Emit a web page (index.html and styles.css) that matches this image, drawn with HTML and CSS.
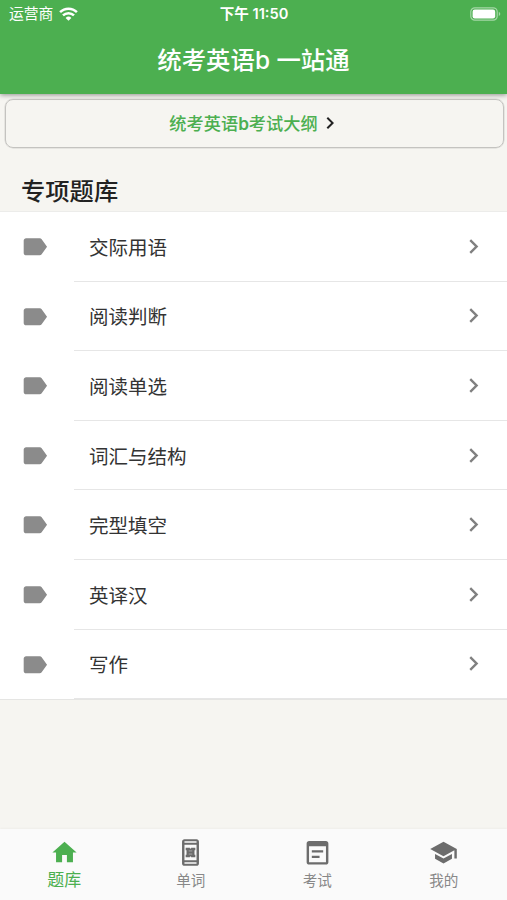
FILE: index.html
```html
<!DOCTYPE html>
<html lang="zh-CN">
<head>
<meta charset="utf-8">
<title>统考英语b 一站通</title>
<link rel="stylesheet" href="styles.css">
</head>
<body>
<svg width="0" height="0" class="defs">
  <symbol id="label" viewBox="0 0 24 24"><path d="M17.63 5.84C17.27 5.33 16.67 5 16 5L5 5.01C3.9 5.01 3 5.9 3 7v10c0 1.1.9 1.99 2 1.99L16 19c.67 0 1.27-.33 1.63-.84L22 12l-4.37-6.16z"/></symbol>
  <symbol id="chevron" viewBox="0 0 24 24"><path d="M10 6L8.59 7.41 13.17 12l-4.58 4.59L10 18l6-6z"/></symbol>
</svg>
<div class="app">
  <header class="header">
    <div class="status">
      <div class="carrier"><span>运营商</span>
        <svg class="wifi" viewBox="0 0 19 14" fill="none"><path d="M1.1 5.2a11.9 11.9 0 0 1 16.8 0M4 8.4a7.8 7.8 0 0 1 11 0"/><path d="M9.5 13.8L6.6 10.9a4.1 4.1 0 0 1 5.8 0z" fill="#fff" stroke="none"/></svg>
      </div>
      <div class="time">下午 11:50</div>
      <svg class="battery" viewBox="0 0 31 14"><rect x=".8" y=".8" width="26.4" height="12.4" rx="4" fill="none" stroke="#a5d7a7" stroke-width="1.2"/><rect x="2.6" y="2.6" width="22.6" height="8.8" rx="2.2" fill="#fff"/><path d="M28.8 4.8q3 2.2 0 4.4z" fill="#a5d7a7"/></svg>
    </div>
    <h1 class="title">统考英语b 一站通</h1>
  </header>
  <main class="main">
    <a class="outline"><span>统考英语<b>b</b>考试大纲</span><svg viewBox="0 0 24 24"><use href="#chevron"/></svg></a>
    <h2 class="section">专项题库</h2>
    <ul class="list">
      <li class="row"><svg class="tag"><use href="#label"/></svg><div class="cell"><span>交际用语</span><svg class="go"><use href="#chevron"/></svg></div></li>
      <li class="row"><svg class="tag"><use href="#label"/></svg><div class="cell"><span>阅读判断</span><svg class="go"><use href="#chevron"/></svg></div></li>
      <li class="row"><svg class="tag"><use href="#label"/></svg><div class="cell"><span>阅读单选</span><svg class="go"><use href="#chevron"/></svg></div></li>
      <li class="row"><svg class="tag"><use href="#label"/></svg><div class="cell"><span>词汇与结构</span><svg class="go"><use href="#chevron"/></svg></div></li>
      <li class="row"><svg class="tag"><use href="#label"/></svg><div class="cell"><span>完型填空</span><svg class="go"><use href="#chevron"/></svg></div></li>
      <li class="row"><svg class="tag"><use href="#label"/></svg><div class="cell"><span>英译汉</span><svg class="go"><use href="#chevron"/></svg></div></li>
      <li class="row"><svg class="tag"><use href="#label"/></svg><div class="cell"><span>写作</span><svg class="go"><use href="#chevron"/></svg></div></li>
    </ul>
  </main>
  <nav class="tabs">
    <a class="tab active"><svg viewBox="0 0 24 24"><path d="M10 20v-6h4v6h5v-8h3L12 3 2 12h3v8z"/></svg><span>题库</span></a>
    <a class="tab"><svg viewBox="0 0 24 24"><path fill-rule="evenodd" d="M17 1H7c-1.1 0-2 .9-2 2v18c0 1.1.9 2 2 2h10c1.1 0 2-.9 2-2V3c0-1.1-.9-2-2-2zM7 2.6h10v1.3H7zM7 5.6h10v12.8H7zM7 20.1h10v1.3H7z"/><path d="M8 8h3.500v.7h1V8H16v2.200h-.7v3.600h.7V16h-3.500v-.7h-1v.7H8v-2.200h.7v-3.600H8z"/><path d="M10.500 10.700h3M10.500 13.300h3" stroke="#bbb" stroke-width=".6"/></svg><span>单词</span></a>
    <a class="tab"><svg viewBox="0 0 24 24"><path fill-rule="evenodd" d="M19 2.500H5c-1.100 0-2 .9-2 2v15.500c0 1.100.9 2 2 2h14c1.100 0 2-.9 2-2V4.500c0-1.100-.9-2-2-2zM5 6.800h14V20H5zM7.300 10.200h9.400v1.900H7.300zM7.300 14.700h6.400v1.900H7.300z"/></svg><span>考试</span></a>
    <a class="tab"><svg viewBox="0 0 24 24"><path d="M5 13.180v4L12 21l7-3.820v-4L12 17l-7-3.820zM12 3L1 9l11 6 9-4.910V17h2V9L12 3z"/></svg><span>我的</span></a>
  </nav>
</div>
</body>
</html>
```
FILE: styles.css
```css
* { box-sizing: border-box; }
body {
  margin: 0;
  font-family: Inter, "Noto Sans CJK SC", sans-serif;
  color: #333;
}
svg { display: block; flex: none; fill: currentColor; }
.defs { position: absolute; }
.app {
  display: flex;
  flex-direction: column;
  height: 900px;
  background: #f6f5f1;
  overflow: hidden;
}
.header {
  height: 94px;
  flex: none;
  background: #4caf50;
  color: #fff;
  box-shadow: 0 1px 5px rgba(0, 0, 0, .42);
}
.status {
  display: grid;
  grid-template-columns: 1fr auto 1fr;
  align-items: center;
  height: 27px;
  padding: 0 6px 0 9px;
  font-size: 14.8px;
  line-height: 27px;
}
.carrier { display: flex; align-items: center; gap: 6px; padding-top: 1px; }
.wifi { width: 19px; height: 14px; margin-top: -2px; fill: none; stroke: #fff; stroke-width: 2.5; }
.time { margin-right: 2px; font-weight: 600; font-size: 14.6px; }
.battery { width: 31px; height: 14px; justify-self: end; margin-top: -1px; }
.title {
  margin: 0;
  height: 66px;
  font-size: 24.4px;
  font-weight: 500;
  line-height: 66px;
  text-align: center;
}
.main { flex: 1; }
.outline {
  display: flex;
  align-items: center;
  justify-content: center;
  height: 49px;
  margin: 4.5px 3.5px 0 4.5px;
  padding: 0 0 1px 3px;
  border: 1px solid #c4c3c0;
  border-radius: 8px;
  box-shadow: 0 0 0 .5px #d6d5d2;
  color: #4caf50;
  font-size: 17.2px;
  font-weight: 500;
}
.outline b { font-weight: 600; }
.outline svg { width: 24px; height: 24px; color: #222; }
.section {
  margin: 0;
  height: 63.5px;
  padding: 20px 21px 0;
  font-size: 24.3px;
  font-weight: 500;
  line-height: 46px;
  color: #222;
}
.list {
  margin: 0;
  padding: 0;
  list-style: none;
  background: #fff;
  border-top: 1px solid #ececea;
  border-bottom: 1px solid #e5e5e3;
}
.row { display: flex; align-items: center; height: 69.6px; }
.tag { width: 29.5px; height: 29.5px; margin: 0 24.5px 0 20px; color: #8b8b8b; }
.cell {
  flex: 1;
  display: flex;
  align-items: center;
  justify-content: space-between;
  height: 100%;
  padding: 0 19.5px 0 15px;
  border-bottom: 1px solid #e6e6e6;
  font-size: 19.5px;
}
.go { width: 29px; height: 29px; color: #808080; }
.tabs {
  display: flex;
  height: 71px;
  background: #fafafa;
  box-shadow: 0 -1px 2px rgba(0, 0, 0, .03);
}
.tab {
  flex: 1;
  display: flex;
  flex-direction: column;
  align-items: center;
  padding-top: 9px;
  color: #6c6c6c;
  font-size: 14.6px;
  line-height: 24px;
}
.tab svg { width: 29px; height: 29px; }
.tab span { margin-top: 2px; color: #888; }
.tab.active { padding-left: 1px; font-size: 17px; }
.tab.active svg { color: #4caf50; }
.tab.active span { margin-top: 1px; color: #4caf50; }
```
